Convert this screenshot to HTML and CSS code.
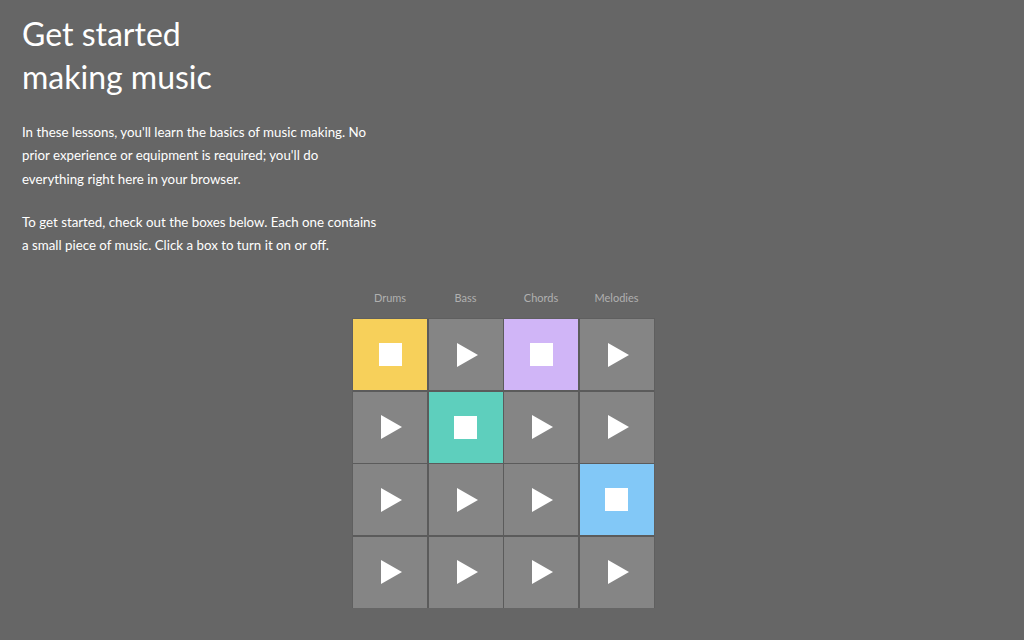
FILE: index.html
```html
<!DOCTYPE html>
<html lang="en">
<head>
<meta charset="UTF-8">
<meta name="viewport" content="width=device-width, initial-scale=1.0">
<title>Get started making music</title>
<link rel="stylesheet" href="styles.css">
</head>
<body>

<section class="intro">
  <h1>Get started<br>making music</h1>
  <p>In these lessons, you'll learn the basics of music making. No prior experience or equipment is required; you'll do everything right here in your browser.</p>
  <p>To get started, check out the boxes below. Each one contains a small piece of music. Click a box to turn it on or off.</p>
</section>

<div class="player">
  <div class="labels">
    <span>Drums</span>
    <span>Bass</span>
    <span>Chords</span>
    <span>Melodies</span>
  </div>
  <div class="board">
    <button class="box drums on"><span class="stop"></span></button>
    <button class="box"><span class="play"></span></button>
    <button class="box chords on"><span class="stop"></span></button>
    <button class="box"><span class="play"></span></button>

    <button class="box"><span class="play"></span></button>
    <button class="box bass on"><span class="stop"></span></button>
    <button class="box"><span class="play"></span></button>
    <button class="box"><span class="play"></span></button>

    <button class="box"><span class="play"></span></button>
    <button class="box"><span class="play"></span></button>
    <button class="box"><span class="play"></span></button>
    <button class="box melodies on"><span class="stop"></span></button>

    <button class="box"><span class="play"></span></button>
    <button class="box"><span class="play"></span></button>
    <button class="box"><span class="play"></span></button>
    <button class="box"><span class="play"></span></button>
  </div>
</div>

</body>
</html>
```

FILE: styles.css
```css
body {
  font-family: Lato, "Open Sans", sans-serif;
  color: #fff;
  background: #666;
  margin: 0;
  padding: 0 22px;
}

h1 {
  font-weight: 400;
  font-size: 32px;
  line-height: 43px;
  margin: 12px 0 23px;
}

.intro p {
  font-size: 13.3px;
  line-height: 23.3px;
  max-width: 360px;
  margin: 0 0 20px;
}

.player {
  width: 300.5px;
  margin: 34px 0 0 331px;
}

.labels {
  display: grid;
  grid-template-columns: repeat(4, 74px);
  gap: 1.5px;
  font-size: 11px;
  color: #b0b0b0;
  text-align: center;
  margin-bottom: 15px;
}

.board {
  display: grid;
  grid-template: repeat(4, 71px) / repeat(4, 74px);
  gap: 1.5px;
  background: #5b5b5b;
  outline: 1px solid #5f5f5f;
}

.box {
  border: none;
  padding: 0;
  background: #858585;
  display: flex;
  align-items: center;
  justify-content: center;
  cursor: pointer;
}

.drums { background: #f7d05a; }
.chords { background: #d0b5f7; }
.bass { background: #5ecfbd; }
.melodies { background: #82c8f7; }

.play {
  width: 0;
  height: 0;
  border-top: 12px solid transparent;
  border-bottom: 12px solid transparent;
  border-left: 21px solid #fff;
  margin-left: 3px;
}

.stop {
  width: 21px;
  height: 21px;
  background: #fff;
  border: 1px solid rgba(255, 255, 255, 0.6);
}
```
